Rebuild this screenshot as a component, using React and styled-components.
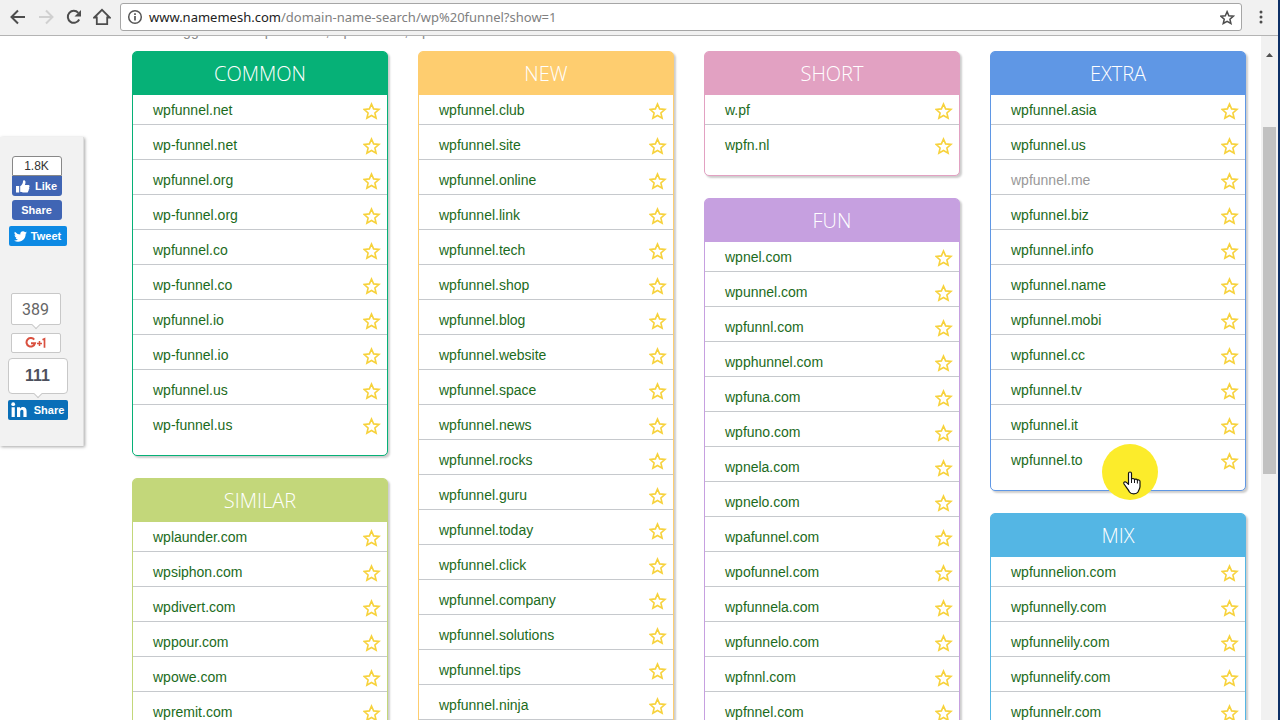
import styled, { createGlobalStyle } from "styled-components";

const GlobalStyle = createGlobalStyle`
  * {
    box-sizing: border-box;
  }
  html, body, #root {
    height: 100%;
  }
  body {
    margin: 0;
    overflow: hidden;
    background: #fff;
    font-family: "Liberation Sans", Arial, sans-serif;
  }
`;

const Window = styled.div`
  height: 100%;
  display: flex;
  flex-direction: column;
  border-right: 2px solid #0d2f66;
`;

const Toolbar = styled.header`
  flex: none;
  height: 36px;
  display: flex;
  align-items: center;
  gap: 4px;
  padding: 0 5px 1px 6px;
  background: #f1f1f1;
  border-bottom: 1px solid #b4b4b4;
`;

const IconButton = styled.button`
  display: flex;
  flex: none;
  align-items: center;
  justify-content: center;
  width: 24px;
  height: 24px;
  padding: 0;
  border: none;
  background: none;
  color: ${(props) => props.$color || "#4d4d4d"};
  cursor: pointer;
`;

const AddressBar = styled.div`
  flex: 1;
  display: flex;
  align-items: center;
  gap: 6px;
  height: 28px;
  margin: 0 3px 0 2px;
  padding: 0 2px 0 6px;
  background: #fff;
  border: 1px solid #a6a6a6;
  border-radius: 3px;
`;

const Url = styled.a`
  flex: 1;
  font-family: "Noto Sans", sans-serif;
  font-size: 13px;
  line-height: 20px;
  color: #808080;
  text-decoration: none;
`;

const Host = styled.span`
  color: #222;
`;

const Viewport = styled.div`
  flex: 1;
  min-height: 0;
  display: flex;
`;

const Page = styled.div`
  flex: 1;
  min-width: 0;
  display: flex;
  align-items: flex-start;
  overflow: hidden;
`;

const ShareBar = styled.aside`
  flex: none;
  display: flex;
  flex-direction: column;
  align-items: center;
  width: 84px;
  height: 309px;
  margin-top: 101px;
  padding: 19px 10px 0 2px;
  background: #f2f2f2;
  border-right: 1px solid #ddd;
  box-shadow: 1px 1px 3px rgba(0, 0, 0, 0.35);
`;

const ShareGroup = styled.div`
  display: flex;
  flex-direction: column;
  align-items: center;
  margin: ${(props) => props.$margin};
`;

const Count = styled.div`
  position: relative;
  display: flex;
  align-items: center;
  justify-content: center;
  width: ${(props) => props.$width}px;
  height: ${(props) => props.$height}px;
  background: #fff;
  border: 1px solid ${(props) => props.$border || "#c8c8c8"};
  border-radius: ${(props) => props.$radius || "2px"};
  font-family: ${(props) => props.$font || "Roboto, sans-serif"};
  font-size: ${(props) => props.$size}px;
  font-weight: ${(props) => props.$weight || 400};
  color: ${(props) => props.$color || "#666"};
`;

const Arrow = styled.span`
  position: absolute;
  left: 50%;
  bottom: -4px;
  width: 6px;
  height: 6px;
  background: #fff;
  border: solid #c8c8c8;
  border-width: 0 1px 1px 0;
  transform: translateX(-50%) rotate(45deg);
`;

const ShareButton = styled.button`
  display: flex;
  flex: none;
  align-items: center;
  justify-content: center;
  gap: ${(props) => props.$gap || 4}px;
  width: ${(props) => props.$width}px;
  height: 20px;
  margin-top: ${(props) => props.$top || 0}px;
  padding: 0;
  border: ${(props) => props.$border || "none"};
  border-radius: ${(props) => props.$radius || "2px"};
  background: ${(props) => props.$background};
  color: ${(props) => props.$color || "#fff"};
  font-family: "Liberation Sans", Arial, sans-serif;
  font-size: 11px;
  font-weight: 700;
  line-height: 20px;
  cursor: pointer;
`;

const Main = styled.main`
  flex: 1;
  min-width: 0;
  padding: 0 15px 0 48px;
`;

const Summary = styled.p`
  display: flex;
  align-items: flex-end;
  height: 15px;
  margin: 0;
  padding: 0 0 12px 34px;
  font-size: 14px;
  line-height: 16px;
  color: #888;
`;

const Columns = styled.div`
  display: grid;
  grid-template-columns: repeat(4, minmax(0, 1fr));
  gap: 30px;
  align-items: start;
`;

const Column = styled.div`
  display: flex;
  flex-direction: column;
  gap: 22px;
`;

const Card = styled.section`
  padding-bottom: 15px;
  background: #fff;
  border: 1px solid ${(props) => props.$color};
  border-radius: 5px;
  box-shadow: 2px 2px 2px rgba(0, 0, 0, 0.2);
`;

const CardTitle = styled.h2`
  margin: 0;
  height: 43px;
  background: ${(props) => props.$color};
  border-radius: 3px 3px 0 0;
  color: #fff;
  font-family: "Open Sans", sans-serif;
  font-size: 20px;
  font-weight: 300;
  line-height: 43px;
  text-align: center;
`;

const List = styled.ul`
  margin: 0;
  padding: 0;
  list-style: none;
`;

const Item = styled.li`
  display: flex;
  align-items: flex-end;
  justify-content: space-between;
  height: 35px;
  padding: 0 6px 4px 20px;
  border-bottom: 1px solid #c6c9cd;

  &:first-child {
    height: 30px;
  }
  &:last-child {
    border-bottom-color: transparent;
  }
`;

const Domain = styled.a`
  font-size: 14px;
  line-height: 20px;
  color: ${(props) => (props.$taken ? "#999" : "#1c6b1c")};
  text-decoration: none;
`;

const Favorite = styled.button`
  display: flex;
  padding: 0;
  border: none;
  background: none;
  cursor: pointer;
`;

const Scrollbar = styled.div`
  flex: none;
  width: 17px;
  display: flex;
  flex-direction: column;
  align-items: center;
  background: #f1f1f1;
`;

const ScrollArrow = styled.div`
  height: 91px;
  padding-top: 7px;
`;

const Thumb = styled.div`
  width: 13px;
  height: 347px;
  background: #c1c1c1;
`;

const Pointer = styled.div`
  position: absolute;
  left: 1102px;
  top: 444px;
  display: flex;
  pointer-events: none;
`;

const columns = [
  [
    {
      title: "COMMON",
      color: "#06b177",
      domains: ["wpfunnel.net", "wp-funnel.net", "wpfunnel.org", "wp-funnel.org", "wpfunnel.co", "wp-funnel.co", "wpfunnel.io", "wp-funnel.io", "wpfunnel.us", "wp-funnel.us"],
    },
    {
      title: "SIMILAR",
      color: "#c3d77a",
      domains: ["wplaunder.com", "wpsiphon.com", "wpdivert.com", "wppour.com", "wpowe.com", "wpremit.com", "wpchannel.com"],
    },
  ],
  [
    {
      title: "NEW",
      color: "#fecd6f",
      domains: ["wpfunnel.club", "wpfunnel.site", "wpfunnel.online", "wpfunnel.link", "wpfunnel.tech", "wpfunnel.shop", "wpfunnel.blog", "wpfunnel.website", "wpfunnel.space", "wpfunnel.news", "wpfunnel.rocks", "wpfunnel.guru", "wpfunnel.today", "wpfunnel.click", "wpfunnel.company", "wpfunnel.solutions", "wpfunnel.tips", "wpfunnel.ninja", "wpfunnel.world"],
    },
  ],
  [
    {
      title: "SHORT",
      color: "#e2a1c2",
      domains: ["w.pf", "wpfn.nl"],
    },
    {
      title: "FUN",
      color: "#c6a0e0",
      domains: ["wpnel.com", "wpunnel.com", "wpfunnl.com", "wpphunnel.com", "wpfuna.com", "wpfuno.com", "wpnela.com", "wpnelo.com", "wpafunnel.com", "wpofunnel.com", "wpfunnela.com", "wpfunnelo.com", "wpfnnl.com", "wpfnnel.com", "wpfunel.com"],
    },
  ],
  [
    {
      title: "EXTRA",
      color: "#5f97e5",
      domains: ["wpfunnel.asia", "wpfunnel.us", "wpfunnel.me", "wpfunnel.biz", "wpfunnel.info", "wpfunnel.name", "wpfunnel.mobi", "wpfunnel.cc", "wpfunnel.tv", "wpfunnel.it", "wpfunnel.to"],
    },
    {
      title: "MIX",
      color: "#54b6e4",
      domains: ["wpfunnelion.com", "wpfunnelly.com", "wpfunnelily.com", "wpfunnelify.com", "wpfunnelr.com", "wpfunnelist.com"],
    },
  ],
];

const taken = ["wpfunnel.me"];

const BackIcon = ({ flip }) => (
  <svg width="16" height="16" viewBox="0 0 16 16" fill="none" stroke="currentColor" strokeWidth="2">
    <path d={flip ? "M1 8h13M8 1.500l6.500 6.500L8 14.500" : "M15 8H2M8 1.500L1.500 8L8 14.500"} />
  </svg>
);

const ReloadIcon = () => (
  <svg width="16" height="16" viewBox="0 0 16 16">
    <path d="M13.200 10.500A6 6 0 1 1 12.300 3.800" fill="none" stroke="currentColor" strokeWidth="2" />
    <path d="M15 1v6.500H8.500z" fill="currentColor" />
  </svg>
);

const HomeIcon = () => (
  <svg width="18" height="18" viewBox="0 0 18 18" fill="none" stroke="currentColor" strokeWidth="1.800">
    <path d="M1.200 9.500L9 1.800l7.800 7.700h-2.600v6.600H3.800V9.500z" />
  </svg>
);

const InfoIcon = () => (
  <svg width="16" height="16" viewBox="0 0 16 16" fill="none" stroke="#555" strokeWidth="1.500">
    <circle cx="8" cy="8" r="6.300" />
    <path d="M8 7v4.500M8 4.300v1.700" strokeWidth="1.700" />
  </svg>
);

const StarIcon = ({ size, color, width }) => (
  <svg width={size} height={size} viewBox="0 0 18 18" fill="none" stroke={color} strokeWidth={width}>
    <path d="M8.500 2l2.100 4.900 5.400.5-4.100 3.600 1.200 5.200-4.600-2.700-4.600 2.700 1.200-5.200L1 7.400l5.400-.5z" />
  </svg>
);

const ThumbIcon = () => (
  <svg width="14" height="13" viewBox="0 0 14 13" fill="#fff">
    <path d="M0 6h3.200v6.500H0zM4.200 6.200C6 5 7 3.500 7 1.300 7-.2 9.500.1 9.500 2.300c0 1-.3 1.900-.6 2.700H12c1.800 0 2 1.600 1 2.200.7.700.5 1.700-.3 2 .5.700.1 1.500-.6 1.800.3.900-.3 1.500-1.300 1.500H7c-1.200 0-1.800-.5-2.800-.7z" />
  </svg>
);

const TwitterIcon = () => (
  <svg width="13" height="13" viewBox="0 0 24 24" fill="#fff">
    <path d="M24 4.600a10 10 0 0 1-2.800.8 5 5 0 0 0 2.100-2.700 10 10 0 0 1-3.100 1.200 4.900 4.900 0 0 0-8.400 4.500A14 14 0 0 1 1.700 3.100a4.900 4.900 0 0 0 1.500 6.600 5 5 0 0 1-2.200-.6 4.900 4.900 0 0 0 3.900 4.900 5 5 0 0 1-2.200.1 4.900 4.900 0 0 0 4.600 3.400A10 10 0 0 1 0 19.500a14 14 0 0 0 21.500-12.400A10 10 0 0 0 24 4.600z" />
  </svg>
);

const LinkedInIcon = () => (
  <svg width="16" height="16" viewBox="0 0 16 16" fill="#fff">
    <circle cx="2.200" cy="2.200" r="1.900" />
    <path d="M.6 5.200h3.200V15H.6zM6 5.200h3v1.400C9.600 5.600 10.600 5 12 5c2.700 0 3.600 1.700 3.600 4.500V15h-3.200v-5c0-1.400-.3-2.300-1.500-2.300-1.300 0-1.700 1-1.700 2.300v5H6z" />
  </svg>
);

const GooglePlusIcon = () => (
  <svg width="22" height="12" viewBox="0 0 22 12" fill="none" stroke="#d9503f" strokeWidth="2">
    <path d="M9.200 2.600A4.300 4.300 0 1 0 10 6.300H6" />
    <path d="M12 6.500h5M14.500 4v5" strokeWidth="1.500" />
    <path d="M17.500 2.800l2-1V10.800" strokeWidth="1.700" />
  </svg>
);

const HandIcon = () => (
  <svg width="56" height="56" viewBox="0 0 56 56">
    <circle cx="28" cy="28" r="28" fill="#fcec2b" />
    <path
      d="M26.500 29.500c0-2 3-2 3 0v6c.3-1.500 3-1.300 3 .4.400-1.200 2.900-1 2.900.6.500-1 2.600-.7 2.600 1v5c0 2.500-1.500 3.500-2 5.500-1.500 2.500-7 2.500-8.500 0-1.500-3-3.500-5-5.500-8-1-1.700 1-2.900 2.400-1.600l2.100 2z"
      fill="#fff"
      stroke="#111"
      strokeWidth="1.200"
      strokeLinejoin="round"
    />
    <path d="M29.500 35v4M32.500 36v3M35.400 37v2.500" stroke="#111" strokeWidth="1" />
  </svg>
);

const DomainCard = ({ title, color, domains }) => (
  <Card $color={color}>
    <CardTitle $color={color}>{title}</CardTitle>
    <List>
      {domains.map((domain) => (
        <Item key={domain}>
          <Domain href={"#" + domain} $taken={taken.includes(domain)}>
            {domain}
          </Domain>
          <Favorite aria-label={"Save " + domain}>
            <StarIcon size={18} color="#f7d23c" width={1.6} />
          </Favorite>
        </Item>
      ))}
    </List>
  </Card>
);

const App = () => {
  return (
    <Window>
      <GlobalStyle />
      <Toolbar>
        <IconButton aria-label="Back"><BackIcon /></IconButton>
        <IconButton aria-label="Forward" $color="#d0d0d0"><BackIcon flip /></IconButton>
        <IconButton aria-label="Reload"><ReloadIcon /></IconButton>
        <IconButton aria-label="Home"><HomeIcon /></IconButton>
        <AddressBar>
          <InfoIcon />
          <Url href="#top">
            <Host>www.namemesh.com</Host>/domain-name-search/wp%20funnel?show=1
          </Url>
          <IconButton aria-label="Bookmark">
            <StarIcon size={15} color="#4d4d4d" width={1.8} />
          </IconButton>
        </AddressBar>
        <IconButton aria-label="Menu">
          <svg width="4" height="16" viewBox="0 0 4 16" fill="currentColor">
            <circle cx="2" cy="3" r="1.500" />
            <circle cx="2" cy="8" r="1.500" />
            <circle cx="2" cy="13" r="1.500" />
          </svg>
        </IconButton>
      </Toolbar>
      <Viewport>
        <Page>
          <ShareBar>
            <ShareGroup $margin="0 2px 0 0">
              <Count $width={50} $height={20} $size={12} $border="#888" $radius="3px 3px 0 0" $font='"Liberation Sans", sans-serif' $color="#333">
                1.8K
              </Count>
              <ShareButton $width={50} $background="#4065b4" $radius="0 0 3px 3px" $gap={5}>
                <ThumbIcon /> Like
              </ShareButton>
              <ShareButton $width={50} $background="#4065b4" $radius="3px" $top={4}>Share</ShareButton>
            </ShareGroup>
            <ShareButton $width={58} $background="#0d8ae4" $top={6}>
              <TwitterIcon /> Tweet
            </ShareButton>
            <ShareGroup $margin="47px 4px 5px 0">
              <Count $width={50} $height={32} $size={16}>
                389
                <Arrow />
              </Count>
              <ShareButton $width={50} $background="#fff" $border="1px solid #c8c8c8" $top={8} aria-label="Google plus one">
                <GooglePlusIcon />
              </ShareButton>
            </ShareGroup>
            <Count $width={60} $height={36} $size={16} $weight={700} $radius="4px" $color="#4d4f5c" $font='"Liberation Sans", sans-serif'>
              111
              <Arrow />
            </Count>
            <ShareButton $width={60} $background="#0a6fb8" $top={6} $gap={7}>
              <LinkedInIcon /> Share
            </ShareButton>
          </ShareBar>
          <Main>
            <Summary>Suggestions : wp channel, wp channel, wp</Summary>
            <Columns>
              {columns.map((cards, index) => (
                <Column key={index}>
                  {cards.map((card) => (
                    <DomainCard key={card.title} {...card} />
                  ))}
                </Column>
              ))}
            </Columns>
          </Main>
        </Page>
        <Scrollbar>
          <ScrollArrow>
            <svg width="7" height="4" viewBox="0 0 7 4" fill="#505050">
              <path d="M3.500 0L7 4H0z" />
            </svg>
          </ScrollArrow>
          <Thumb />
        </Scrollbar>
      </Viewport>
      <Pointer>
        <HandIcon />
      </Pointer>
    </Window>
  );
};

export default App;
